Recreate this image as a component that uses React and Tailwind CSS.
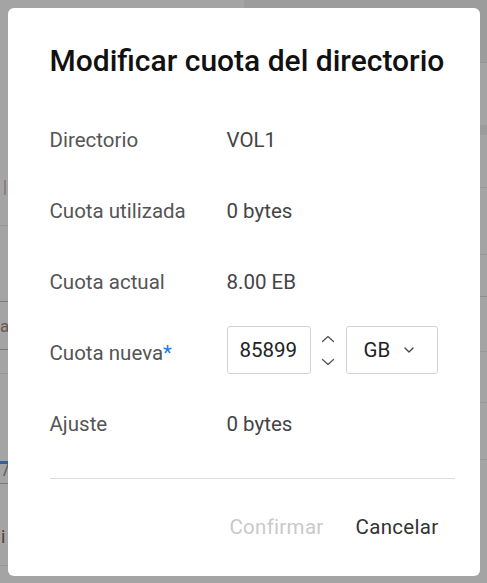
import React, { useState } from "react";

const rows = [
  { label: "Directorio", value: "VOL1" },
  { label: "Cuota utilizada", value: "0 bytes" },
  { label: "Cuota actual", value: "8.00 EB" },
];

const Chevron = ({ up = false }) => (
  <svg width="14" height="8" viewBox="0 0 14 8" fill="none">
    <path
      d={up ? "M1.5 6.5L7 1.5L12.5 6.5" : "M1.5 1.5L7 6.5L12.5 1.5"}
      stroke="#555"
      strokeWidth="1.3"
      strokeLinecap="round"
      strokeLinejoin="round"
    />
  </svg>
);

const App = () => {
  const [quota, setQuota] = useState("85899");

  return (
    <div className="relative w-[487px] h-[583px] overflow-hidden bg-[#a4a4a4] font-['Roboto',sans-serif]">
      {/* Dimmed page behind the dialog */}
      <div className="flex h-full">
        <div className="w-1/2 flex flex-col">
          <div className="h-[226px] border-b border-[#989898] relative">
            <span className="absolute left-[4px] top-[180px] w-[2px] h-[15px] bg-[#8f7f78]" />
          </div>
          <div className="h-[76px] border-b border-[#7c7c7c]" />
          <div className="h-[48px] border-b border-[#7a7a7a] relative">
            <span className="absolute left-0 top-[16px] text-[17px] leading-none text-[#6b5a55]">a</span>
          </div>
          <div className="h-[24px] border-b border-[#959595]" />
          <div className="h-[90px] border-b-[3px] border-[#35619a]" />
          <div className="h-[20px] border-b border-[#7a7a7a] relative">
            <span className="absolute left-[3px] top-[-2px] text-[16px] leading-none text-[#555]">/</span>
          </div>
          <div className="h-[82px] border-b border-[#969696] relative">
            <span className="absolute left-[1px] top-[44px] text-[18px] leading-none text-[#5a3a3a]">i</span>
          </div>
        </div>
        <div className="w-1/2 flex flex-col">
          <div className="h-[63px] bg-[#9c9c9c] border-b border-[#959595]" />
          <div className="h-[62px]" />
          <div className="h-[10px] bg-[#9b9b9b]" />
          <div className="h-[53px] border-b border-[#989898]" />
          <div className="h-[67px] border-b border-[#989898]" />
          <div className="h-[42px] border-b border-[#8e8e8e]" />
          <div className="h-[55px] border-b border-[#989898]" />
          <div className="h-[51px] border-b border-[#989898]" />
          <div className="h-[57px] border-b border-[#989898]" />
        </div>
      </div>

      {/* Dialog */}
      <div className="absolute inset-0 flex items-center justify-center">
        <div className="w-[472px] h-[568px] bg-white rounded-[6px] pl-[42px] pr-[25px] flex flex-col">
          <h2 className="mt-[29px] text-[30px] leading-[48px] font-medium text-[#111]">
            Modificar cuota del directorio
          </h2>

          <div className="mt-[20px] flex flex-col text-[20.5px] text-[#555]">
            {rows.map((r) => (
              <div key={r.label} className="h-[71px] flex items-center">
                <span className="w-[177px]">{r.label}</span>
                <span className="text-[#444]">{r.value}</span>
              </div>
            ))}
            <div className="h-[71px] flex items-center">
              <span className="w-[177px]">
                Cuota nueva<span className="text-[#1a7ae6]">*</span>
              </span>
              <div className="flex items-center -mt-[6px]">
                <input
                  value={quota}
                  onChange={(e) => setQuota(e.target.value)}
                  className="w-[84px] h-[48px] border border-[#d2d2d2] rounded-[3px] pl-[12px] pr-[6px] text-[20.5px] text-[#222] outline-none"
                />
                <div className="w-[35px] flex flex-col items-center gap-[15px]">
                  <Chevron up />
                  <Chevron />
                </div>
                <button className="w-[92px] h-[48px] border border-[#d2d2d2] rounded-[3px] pl-[17px] flex items-center gap-[14px] text-[20.5px] text-[#222]">
                  GB
                  <svg width="10" height="6" viewBox="0 0 10 6" fill="none">
                    <path d="M1 1L5 5L9 1" stroke="#444" strokeWidth="1.3" strokeLinecap="round" strokeLinejoin="round" />
                  </svg>
                </button>
              </div>
            </div>
            <div className="h-[71px] flex items-center">
              <span className="w-[177px]">Ajuste</span>
              <span className="text-[#444]">0 bytes</span>
            </div>
          </div>

          <div className="mt-[18px] border-t border-[#dcdcdc]" />

          <div className="mt-[25px] flex justify-end text-[20.5px] tracking-[0.3px]">
            <button disabled className="px-[16px] h-[48px] text-[#c9c9c9]">
              Confirmar
            </button>
            <button className="px-[16px] h-[48px] text-[#333]">Cancelar</button>
          </div>
        </div>
      </div>
    </div>
  );
};

export default App;
